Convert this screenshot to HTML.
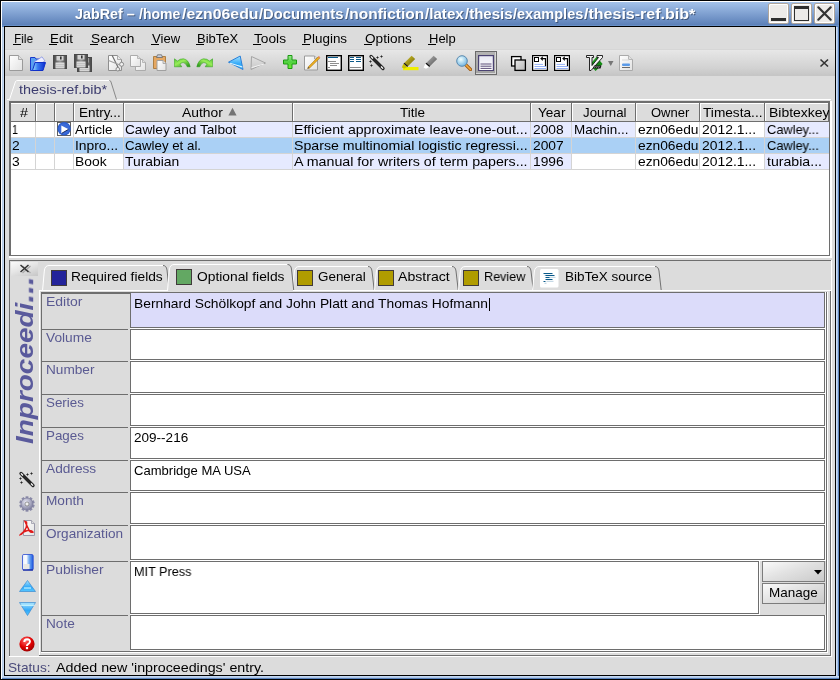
<!DOCTYPE html>
<html><head><meta charset="utf-8">
<style>
*{margin:0;padding:0;box-sizing:border-box}
html,body{width:840px;height:680px;overflow:hidden;background:#dcdcdc}
body{position:relative;font-family:"Liberation Sans",sans-serif;font-size:12px;color:#000}
.a{position:absolute;display:block}
.t{position:absolute;white-space:nowrap;transform-origin:0 0;will-change:transform}
</style></head><body>
<div class="a" style="left:0px;top:0px;width:840px;height:680px;background:#000"></div>
<div class="a" style="left:1px;top:1px;width:838px;height:678px;background:linear-gradient(#a4c2ea 1px,#5c80b8 24px,#6890c8 24px,#6890c8 25px,#5a82bc 25px);"></div>
<div class="a" style="left:1px;top:1px;width:838px;height:1px;background:#fff"></div>
<div class="a" style="left:1px;top:1px;width:1px;height:678px;background:#fff"></div>
<div class="a" style="left:2px;top:27px;width:1px;height:649px;background:#b8cce6"></div>
<div class="a" style="left:3px;top:27px;width:1px;height:649px;background:#c4d8f2"></div>
<div class="a" style="left:836px;top:27px;width:1px;height:649px;background:#c8dbf3"></div>
<div class="a" style="left:837px;top:27px;width:1px;height:649px;background:#a9c3e7"></div>
<div class="a" style="left:838px;top:27px;width:1px;height:649px;background:#5a82bc"></div>
<div class="a" style="left:2px;top:676px;width:837px;height:1px;background:#c4d8f2"></div>
<div class="a" style="left:2px;top:677px;width:837px;height:1px;background:#b0c8e8"></div>
<div class="a" style="left:2px;top:678px;width:837px;height:1px;background:#5a82bc"></div>
<div class="a" style="left:4px;top:26px;width:832px;height:650px;background:#000"></div>
<div class="a" style="left:5px;top:27px;width:830px;height:648px;background:#dcdcdc"></div>
<div class="t" style="left:76.00px;top:8.00px;font-size:14px;line-height:14px;color:rgba(20,30,50,.5);font-weight:bold;font-style:normal;transform:scaleX(1.0214);">JabRef –</div>
<div class="t" style="left:140.30px;top:8.00px;font-size:14px;line-height:14px;color:rgba(20,30,50,.5);font-weight:bold;font-style:normal;transform:scaleX(1.0036);">/home</div>
<div class="t" style="left:183.30px;top:8.00px;font-size:14px;line-height:14px;color:rgba(20,30,50,.5);font-weight:bold;font-style:normal;transform:scaleX(1.1300);">/ezn06edu</div>
<div class="t" style="left:260.30px;top:8.00px;font-size:14px;line-height:14px;color:rgba(20,30,50,.5);font-weight:bold;font-style:normal;transform:scaleX(1.0524);">/Documents</div>
<div class="t" style="left:345.60px;top:8.00px;font-size:14px;line-height:14px;color:rgba(20,30,50,.5);font-weight:bold;font-style:normal;transform:scaleX(1.1069);">/nonfiction</div>
<div class="t" style="left:425.80px;top:8.00px;font-size:14px;line-height:14px;color:rgba(20,30,50,.5);font-weight:bold;font-style:normal;transform:scaleX(1.0838);">/latex</div>
<div class="t" style="left:465.60px;top:8.00px;font-size:14px;line-height:14px;color:rgba(20,30,50,.5);font-weight:bold;font-style:normal;transform:scaleX(1.0733);">/thesis</div>
<div class="t" style="left:513.60px;top:8.00px;font-size:14px;line-height:14px;color:rgba(20,30,50,.5);font-weight:bold;font-style:normal;transform:scaleX(1.0384);">/examples</div>
<div class="t" style="left:584.90px;top:8.00px;font-size:14px;line-height:14px;color:rgba(20,30,50,.5);font-weight:bold;font-style:normal;transform:scaleX(1.1445);">/thesis-ref.bib*</div>
<div class="t" style="left:75.00px;top:7.00px;font-size:14px;line-height:14px;color:#fff;font-weight:bold;font-style:normal;transform:scaleX(1.0214);">JabRef –</div>
<div class="t" style="left:139.30px;top:7.00px;font-size:14px;line-height:14px;color:#fff;font-weight:bold;font-style:normal;transform:scaleX(1.0036);">/home</div>
<div class="t" style="left:182.30px;top:7.00px;font-size:14px;line-height:14px;color:#fff;font-weight:bold;font-style:normal;transform:scaleX(1.1300);">/ezn06edu</div>
<div class="t" style="left:259.30px;top:7.00px;font-size:14px;line-height:14px;color:#fff;font-weight:bold;font-style:normal;transform:scaleX(1.0524);">/Documents</div>
<div class="t" style="left:344.60px;top:7.00px;font-size:14px;line-height:14px;color:#fff;font-weight:bold;font-style:normal;transform:scaleX(1.1069);">/nonfiction</div>
<div class="t" style="left:424.80px;top:7.00px;font-size:14px;line-height:14px;color:#fff;font-weight:bold;font-style:normal;transform:scaleX(1.0838);">/latex</div>
<div class="t" style="left:464.60px;top:7.00px;font-size:14px;line-height:14px;color:#fff;font-weight:bold;font-style:normal;transform:scaleX(1.0733);">/thesis</div>
<div class="t" style="left:512.60px;top:7.00px;font-size:14px;line-height:14px;color:#fff;font-weight:bold;font-style:normal;transform:scaleX(1.0384);">/examples</div>
<div class="t" style="left:583.90px;top:7.00px;font-size:14px;line-height:14px;color:#fff;font-weight:bold;font-style:normal;transform:scaleX(1.1445);">/thesis-ref.bib*</div>
<div class="a" style="left:768px;top:3px;width:21px;height:21px;background:#edebe9;border:1px solid #b0a69c;border-radius:2px;box-shadow:inset 1px 1px 0 #fff, inset -1px -1px 0 #fff"></div>
<div class="a" style="left:791px;top:3px;width:21px;height:21px;background:#edebe9;border:1px solid #b0a69c;border-radius:2px;box-shadow:inset 1px 1px 0 #fff, inset -1px -1px 0 #fff"></div>
<div class="a" style="left:814px;top:3px;width:21px;height:21px;background:#edebe9;border:1px solid #b0a69c;border-radius:2px;box-shadow:inset 1px 1px 0 #fff, inset -1px -1px 0 #fff"></div>
<div class="a" style="left:771px;top:18px;width:15px;height:3px;background:#2e2e2e"></div>
<div class="a" style="left:794px;top:6px;width:15px;height:15px;border:1px solid #2e2e2e;border-top:3px solid #2e2e2e;background:#eceae8"></div>
<svg class="a" style="left:814px;top:3px;" width="21" height="21" viewBox="0 0 21 21"><path d="M4.3 4.3 L16.7 16.7 M16.7 4.3 L4.3 16.7" stroke="#333" stroke-width="2.2" stroke-linecap="round"/></svg>
<div class="t" style="left:13.90px;top:32.00px;font-size:13px;line-height:13px;color:#000;font-weight:normal;font-style:normal;transform:scaleX(0.9117);">File</div>
<div class="a" style="left:13px;top:44px;width:8px;height:1px;background:#000"></div>
<div class="t" style="left:50.00px;top:32.00px;font-size:13px;line-height:13px;color:#000;font-weight:normal;font-style:normal;transform:scaleX(1.0268);">Edit</div>
<div class="a" style="left:49px;top:44px;width:8px;height:1px;background:#000"></div>
<div class="t" style="left:91.30px;top:32.00px;font-size:13px;line-height:13px;color:#000;font-weight:normal;font-style:normal;transform:scaleX(1.0534);">Search</div>
<div class="a" style="left:90px;top:44px;width:8px;height:1px;background:#000"></div>
<div class="t" style="left:151.80px;top:32.00px;font-size:13px;line-height:13px;color:#000;font-weight:normal;font-style:normal;transform:scaleX(1.0071);">View</div>
<div class="a" style="left:151px;top:44px;width:8px;height:1px;background:#000"></div>
<div class="t" style="left:197.00px;top:32.00px;font-size:13px;line-height:13px;color:#000;font-weight:normal;font-style:normal;transform:scaleX(0.9951);">BibTeX</div>
<div class="a" style="left:196px;top:44px;width:8px;height:1px;background:#000"></div>
<div class="t" style="left:254.30px;top:32.00px;font-size:13px;line-height:13px;color:#000;font-weight:normal;font-style:normal;transform:scaleX(1.0544);">Tools</div>
<div class="a" style="left:253px;top:44px;width:8px;height:1px;background:#000"></div>
<div class="t" style="left:303.30px;top:32.00px;font-size:13px;line-height:13px;color:#000;font-weight:normal;font-style:normal;transform:scaleX(1.0340);">Plugins</div>
<div class="a" style="left:302px;top:44px;width:8px;height:1px;background:#000"></div>
<div class="t" style="left:364.60px;top:32.00px;font-size:13px;line-height:13px;color:#000;font-weight:normal;font-style:normal;transform:scaleX(1.0469);">Options</div>
<div class="a" style="left:364px;top:44px;width:8px;height:1px;background:#000"></div>
<div class="t" style="left:429.30px;top:32.00px;font-size:13px;line-height:13px;color:#000;font-weight:normal;font-style:normal;transform:scaleX(0.9981);">Help</div>
<div class="a" style="left:428px;top:44px;width:8px;height:1px;background:#000"></div>
<div class="a" style="left:5px;top:49px;width:830px;height:1px;background:#d6d6d6"></div>
<div class="a" style="left:5px;top:50px;width:830px;height:26px;background:linear-gradient(#e7e7e7,#e2e2e2 4px,#d2d2d2 18px,#c6c6c6 25px)"></div>
<div class="a" style="left:7px;top:99px;width:824px;height:1px;background:#fff"></div>
<svg class="a" style="left:8px;top:79px;" width="112" height="22" viewBox="0 0 112 22"><path d="M1.5 20.5 L7.5 2.5 Q8.2 1.5 10 1.5 L101 1.5" fill="#e0e0e0" stroke="none"/><path d="M1 21 L1.5 20.5 L7.5 2.5 Q8.2 1.5 10 1.5 L101 1.5 Q102.5 1.5 103 3 L108.5 21 Z" fill="#dfdfdf"/><path d="M0 20.5 L1.5 20.5 L7.5 2.5 Q8.2 1.5 10 1.5 L101 1.5" fill="none" stroke="#fff" stroke-width="1"/><path d="M101.5 1.5 Q102.5 1.5 103 3 L108.5 20.5" fill="none" stroke="#888" stroke-width="1"/></svg>
<div class="t" style="left:18.90px;top:83.00px;font-size:13px;line-height:13px;color:#3c3c6e;font-weight:normal;font-style:normal;transform:scaleX(1.1082);">thesis-ref.bib*</div>
<div class="a" style="left:9px;top:101px;width:823px;height:157px;background:#fff"></div>
<div class="a" style="left:9px;top:101px;width:822px;height:2px;background:#6e6e6e"></div>
<div class="a" style="left:9px;top:101px;width:2px;height:155px;background:#6e6e6e"></div>
<div class="a" style="left:9px;top:255px;width:821px;height:1px;background:#6e6e6e"></div>
<div class="a" style="left:829px;top:101px;width:1px;height:155px;background:#6e6e6e"></div>
<div class="a" style="left:830px;top:101px;width:2px;height:157px;background:#fff"></div>
<div class="a" style="left:9px;top:256px;width:823px;height:2px;background:#fff"></div>
<div class="a" style="left:11px;top:103px;width:818px;height:18px;background:#dcdcdc"></div>
<div class="a" style="left:11px;top:103px;width:818px;height:1px;background:#fff"></div>
<div class="a" style="left:35px;top:102px;width:1px;height:20px;background:#6e6e6e"></div>
<div class="a" style="left:36px;top:103px;width:1px;height:18px;background:#fff"></div>
<div class="a" style="left:54px;top:102px;width:1px;height:20px;background:#6e6e6e"></div>
<div class="a" style="left:55px;top:103px;width:1px;height:18px;background:#fff"></div>
<div class="a" style="left:73px;top:102px;width:1px;height:20px;background:#6e6e6e"></div>
<div class="a" style="left:74px;top:103px;width:1px;height:18px;background:#fff"></div>
<div class="a" style="left:123px;top:102px;width:1px;height:20px;background:#6e6e6e"></div>
<div class="a" style="left:124px;top:103px;width:1px;height:18px;background:#fff"></div>
<div class="a" style="left:292px;top:102px;width:1px;height:20px;background:#6e6e6e"></div>
<div class="a" style="left:293px;top:103px;width:1px;height:18px;background:#fff"></div>
<div class="a" style="left:530px;top:102px;width:1px;height:20px;background:#6e6e6e"></div>
<div class="a" style="left:531px;top:103px;width:1px;height:18px;background:#fff"></div>
<div class="a" style="left:571px;top:102px;width:1px;height:20px;background:#6e6e6e"></div>
<div class="a" style="left:572px;top:103px;width:1px;height:18px;background:#fff"></div>
<div class="a" style="left:635px;top:102px;width:1px;height:20px;background:#6e6e6e"></div>
<div class="a" style="left:636px;top:103px;width:1px;height:18px;background:#fff"></div>
<div class="a" style="left:699px;top:102px;width:1px;height:20px;background:#6e6e6e"></div>
<div class="a" style="left:700px;top:103px;width:1px;height:18px;background:#fff"></div>
<div class="a" style="left:764px;top:102px;width:1px;height:20px;background:#6e6e6e"></div>
<div class="a" style="left:765px;top:103px;width:1px;height:18px;background:#fff"></div>
<div class="a" style="left:11px;top:121px;width:818px;height:1px;background:#6e6e6e"></div>
<div class="a" style="left:828px;top:102px;width:1px;height:20px;background:#6e6e6e"></div>
<div class="a" style="left:11px;top:122px;width:24px;height:15px;background:#fff"></div>
<div class="a" style="left:35px;top:122px;width:19px;height:15px;background:#fff"></div>
<div class="a" style="left:54px;top:122px;width:19px;height:15px;background:#fff"></div>
<div class="a" style="left:73px;top:122px;width:50px;height:15px;background:#fff"></div>
<div class="a" style="left:123px;top:122px;width:169px;height:15px;background:#e6eaff"></div>
<div class="a" style="left:292px;top:122px;width:238px;height:15px;background:#e6eaff"></div>
<div class="a" style="left:530px;top:122px;width:41px;height:15px;background:#e6eaff"></div>
<div class="a" style="left:571px;top:122px;width:64px;height:15px;background:#e6eaff"></div>
<div class="a" style="left:635px;top:122px;width:64px;height:15px;background:#fff"></div>
<div class="a" style="left:699px;top:122px;width:65px;height:15px;background:#fff"></div>
<div class="a" style="left:764px;top:122px;width:65px;height:15px;background:#e6eaff"></div>
<div class="a" style="left:11px;top:138px;width:24px;height:15px;background:#aad0f5"></div>
<div class="a" style="left:35px;top:138px;width:19px;height:15px;background:#aad0f5"></div>
<div class="a" style="left:54px;top:138px;width:19px;height:15px;background:#aad0f5"></div>
<div class="a" style="left:73px;top:138px;width:50px;height:15px;background:#aad0f5"></div>
<div class="a" style="left:123px;top:138px;width:169px;height:15px;background:#aad0f5"></div>
<div class="a" style="left:292px;top:138px;width:238px;height:15px;background:#aad0f5"></div>
<div class="a" style="left:530px;top:138px;width:41px;height:15px;background:#aad0f5"></div>
<div class="a" style="left:571px;top:138px;width:64px;height:15px;background:#aad0f5"></div>
<div class="a" style="left:635px;top:138px;width:64px;height:15px;background:#aad0f5"></div>
<div class="a" style="left:699px;top:138px;width:65px;height:15px;background:#aad0f5"></div>
<div class="a" style="left:764px;top:138px;width:65px;height:15px;background:#aad0f5"></div>
<div class="a" style="left:11px;top:154px;width:24px;height:15px;background:#fff"></div>
<div class="a" style="left:35px;top:154px;width:19px;height:15px;background:#fff"></div>
<div class="a" style="left:54px;top:154px;width:19px;height:15px;background:#fff"></div>
<div class="a" style="left:73px;top:154px;width:50px;height:15px;background:#fff"></div>
<div class="a" style="left:123px;top:154px;width:169px;height:15px;background:#e6eaff"></div>
<div class="a" style="left:292px;top:154px;width:238px;height:15px;background:#e6eaff"></div>
<div class="a" style="left:530px;top:154px;width:41px;height:15px;background:#e6eaff"></div>
<div class="a" style="left:571px;top:154px;width:64px;height:15px;background:#fff"></div>
<div class="a" style="left:635px;top:154px;width:64px;height:15px;background:#fff"></div>
<div class="a" style="left:699px;top:154px;width:65px;height:15px;background:#fff"></div>
<div class="a" style="left:764px;top:154px;width:65px;height:15px;background:#e6eaff"></div>
<div class="a" style="left:11px;top:137px;width:818px;height:1px;background:#d4d4d4"></div>
<div class="a" style="left:11px;top:153px;width:818px;height:1px;background:#d4d4d4"></div>
<div class="a" style="left:11px;top:169px;width:818px;height:1px;background:#d4d4d4"></div>
<div class="a" style="left:35px;top:122px;width:1px;height:48px;background:#d4d4d4"></div>
<div class="a" style="left:54px;top:122px;width:1px;height:48px;background:#d4d4d4"></div>
<div class="a" style="left:73px;top:122px;width:1px;height:48px;background:#d4d4d4"></div>
<div class="a" style="left:123px;top:122px;width:1px;height:48px;background:#d4d4d4"></div>
<div class="a" style="left:292px;top:122px;width:1px;height:48px;background:#d4d4d4"></div>
<div class="a" style="left:530px;top:122px;width:1px;height:48px;background:#d4d4d4"></div>
<div class="a" style="left:571px;top:122px;width:1px;height:48px;background:#d4d4d4"></div>
<div class="a" style="left:635px;top:122px;width:1px;height:48px;background:#d4d4d4"></div>
<div class="a" style="left:699px;top:122px;width:1px;height:48px;background:#d4d4d4"></div>
<div class="a" style="left:764px;top:122px;width:1px;height:48px;background:#d4d4d4"></div>
<div class="t" style="left:20.00px;top:106.00px;font-size:13px;line-height:13px;color:#000;font-weight:normal;font-style:normal;transform:scaleX(1.1034);">#</div>
<div class="t" style="left:78.60px;top:106.00px;font-size:13px;line-height:13px;color:#000;font-weight:normal;font-style:normal;transform:scaleX(1.0398);">Entry...</div>
<div class="t" style="left:182.10px;top:106.00px;font-size:13px;line-height:13px;color:#000;font-weight:normal;font-style:normal;transform:scaleX(1.0653);">Author</div>
<div class="t" style="left:400.40px;top:106.00px;font-size:13px;line-height:13px;color:#000;font-weight:normal;font-style:normal;transform:scaleX(1.0373);">Title</div>
<div class="t" style="left:538.30px;top:106.00px;font-size:13px;line-height:13px;color:#000;font-weight:normal;font-style:normal;transform:scaleX(1.0438);">Year</div>
<div class="t" style="left:583.30px;top:106.00px;font-size:13px;line-height:13px;color:#000;font-weight:normal;font-style:normal;transform:scaleX(1.0199);">Journal</div>
<div class="t" style="left:651.00px;top:106.00px;font-size:13px;line-height:13px;color:#000;font-weight:normal;font-style:normal;transform:scaleX(0.9922);">Owner</div>
<div class="t" style="left:703.40px;top:106.00px;font-size:13px;line-height:13px;color:#000;font-weight:normal;font-style:normal;transform:scaleX(1.0512);">Timesta...</div>
<div class="a" style="left:764px;top:103px;width:65px;height:17px;overflow:hidden">
<div class="t" style="left:5.00px;top:3.00px;font-size:13px;line-height:13px;color:#000;font-weight:normal;font-style:normal;transform:scaleX(1.0754);">Bibtexkey</div>
</div>
<svg class="a" style="left:228px;top:107px;" width="9" height="9" viewBox="0 0 9 9"><path d="M4.5 0.7 L8.6 8.5 L0.4 8.5 Z" fill="#747474"/></svg>
<div class="t" style="left:12.00px;top:123.00px;font-size:13px;line-height:13px;color:#000;font-weight:normal;font-style:normal;transform:scaleX(0.8276);">1</div>
<div class="t" style="left:12.00px;top:139.00px;font-size:13px;line-height:13px;color:#000;font-weight:normal;font-style:normal;transform:scaleX(1.0650);">2</div>
<div class="t" style="left:12.00px;top:155.00px;font-size:13px;line-height:13px;color:#000;font-weight:normal;font-style:normal;transform:scaleX(1.0650);">3</div>
<div class="t" style="left:75.30px;top:123.00px;font-size:13px;line-height:13px;color:#000;font-weight:normal;font-style:normal;transform:scaleX(1.0416);">Article</div>
<div class="t" style="left:75.30px;top:139.00px;font-size:13px;line-height:13px;color:#000;font-weight:normal;font-style:normal;transform:scaleX(1.0650);">Inpro...</div>
<div class="t" style="left:75.30px;top:155.00px;font-size:13px;line-height:13px;color:#000;font-weight:normal;font-style:normal;transform:scaleX(1.0650);">Book</div>
<div class="t" style="left:125.40px;top:123.00px;font-size:13px;line-height:13px;color:#000;font-weight:normal;font-style:normal;transform:scaleX(1.0509);">Cawley and Talbot</div>
<div class="t" style="left:125.40px;top:139.00px;font-size:13px;line-height:13px;color:#000;font-weight:normal;font-style:normal;transform:scaleX(1.0215);">Cawley et al.</div>
<div class="t" style="left:125.40px;top:155.00px;font-size:13px;line-height:13px;color:#000;font-weight:normal;font-style:normal;transform:scaleX(1.0669);">Turabian</div>
<div class="t" style="left:294.00px;top:123.00px;font-size:13px;line-height:13px;color:#000;font-weight:normal;font-style:normal;transform:scaleX(1.0860);">Efficient approximate leave-one-out...</div>
<div class="t" style="left:294.00px;top:139.00px;font-size:13px;line-height:13px;color:#000;font-weight:normal;font-style:normal;transform:scaleX(1.0888);">Sparse multinomial logistic regressi...</div>
<div class="t" style="left:294.00px;top:155.00px;font-size:13px;line-height:13px;color:#000;font-weight:normal;font-style:normal;transform:scaleX(1.0959);">A manual for writers of term papers...</div>
<div class="t" style="left:532.50px;top:123.00px;font-size:13px;line-height:13px;color:#000;font-weight:normal;font-style:normal;transform:scaleX(1.0623);">2008</div>
<div class="t" style="left:532.50px;top:139.00px;font-size:13px;line-height:13px;color:#000;font-weight:normal;font-style:normal;transform:scaleX(1.0623);">2007</div>
<div class="t" style="left:532.50px;top:155.00px;font-size:13px;line-height:13px;color:#000;font-weight:normal;font-style:normal;transform:scaleX(1.0623);">1996</div>
<div class="t" style="left:573.50px;top:123.00px;font-size:13px;line-height:13px;color:#000;font-weight:normal;font-style:normal;transform:scaleX(1.0332);">Machin...</div>
<div class="t" style="left:637.50px;top:123.00px;font-size:13px;line-height:13px;color:#000;font-weight:normal;font-style:normal;transform:scaleX(1.0595);">ezn06edu</div>
<div class="t" style="left:701.60px;top:123.00px;font-size:13px;line-height:13px;color:#000;font-weight:normal;font-style:normal;transform:scaleX(1.0692);">2012.1...</div>
<div class="t" style="left:637.50px;top:139.00px;font-size:13px;line-height:13px;color:#000;font-weight:normal;font-style:normal;transform:scaleX(1.0595);">ezn06edu</div>
<div class="t" style="left:701.60px;top:139.00px;font-size:13px;line-height:13px;color:#000;font-weight:normal;font-style:normal;transform:scaleX(1.0692);">2012.1...</div>
<div class="t" style="left:637.50px;top:155.00px;font-size:13px;line-height:13px;color:#000;font-weight:normal;font-style:normal;transform:scaleX(1.0595);">ezn06edu</div>
<div class="t" style="left:701.60px;top:155.00px;font-size:13px;line-height:13px;color:#000;font-weight:normal;font-style:normal;transform:scaleX(1.0692);">2012.1...</div>
<div class="t" style="left:766.80px;top:123.00px;font-size:13px;line-height:13px;color:#000;font-weight:normal;font-style:normal;transform:scaleX(0.9867);">Cawley...</div>
<div class="t" style="left:766.80px;top:139.00px;font-size:13px;line-height:13px;color:#000;font-weight:normal;font-style:normal;transform:scaleX(0.9867);">Cawley...</div>
<div class="t" style="left:766.80px;top:155.00px;font-size:13px;line-height:13px;color:#000;font-weight:normal;font-style:normal;transform:scaleX(1.0870);">turabia...</div>
<svg class="a" style="left:57px;top:122px;" width="14" height="14" viewBox="0 0 14 14"><rect x="0.5" y="0.5" width="13" height="13" fill="none" stroke="#505050" stroke-width=".9"/><circle cx="7.1" cy="6.8" r="6.7" fill="#2a5ccc"/><circle cx="7.1" cy="6.8" r="5.6" fill="#3a6ad8"/><path d="M4.3 3.5 L11.6 7.3 L4.3 11.5 Z" fill="#fff"/><path d="M4.6 11.4 L11.6 7.3" stroke="#102050" stroke-width=".9"/></svg>
<div class="a" style="left:9px;top:260px;width:823px;height:1px;background:#6e6e6e"></div>
<div class="a" style="left:9px;top:260px;width:1px;height:397px;background:#6e6e6e"></div>
<div class="a" style="left:9px;top:656px;width:823px;height:1px;background:#fff"></div>
<div class="a" style="left:831px;top:260px;width:1px;height:397px;background:#fff"></div>
<div class="a" style="left:11px;top:262px;width:27px;height:14px;background:linear-gradient(160deg,#fafafa,#e6e6e6 45%,#c6c6c6)"></div>
<svg class="a" style="left:19px;top:264px;" width="13" height="11" viewBox="0 0 13 11"><path d="M2.5 1.5 L10.5 8.5 M10.5 1.5 L2.5 8.5" stroke="#aaa" stroke-width="1.3" transform="translate(1,0.6)"/><path d="M1.5 1 L9.5 8 M9.5 1 L1.5 8" stroke="#333" stroke-width="1.5"/></svg>
<div class="t" style="left:0;top:0;width:0;height:0;transform:translate(33px,444px) rotate(-90deg)"><div class="t" style="left:-0.00px;top:-20.50px;font-size:24px;line-height:24px;font-weight:bold;font-style:italic;color:#5a5a9c;transform:scaleX(1.1642)">Inproceedi</div></div>
<div class="t" style="left:0;top:0;width:0;height:0;transform:translate(33.2px,302.6px) rotate(-90deg)"><div class="t" style="left:-0.00px;top:-23.50px;font-size:28px;line-height:28px;font-weight:bold;font-style:italic;color:#5a5a9c;transform:scaleX(1.1306)">...</div></div>
<div class="a" style="left:39px;top:290px;width:792px;height:1px;background:#fff"></div>
<div class="a" style="left:39px;top:290px;width:1px;height:366px;background:#fff"></div>
<div class="a" style="left:39px;top:655px;width:792px;height:1px;background:#6e6e6e"></div>
<div class="a" style="left:830px;top:290px;width:1px;height:366px;background:#6e6e6e"></div>
<svg class="a" style="left:42px;top:265px;" width="129" height="27" viewBox="0 0 129 27"><path d="M0.5 26 L2.3 6 Q2.8 0.5 7 0.5 L121 0.5 Q124.4 0.5 125 5 L127.5 26" fill="#dcdcdc" stroke="none"/><path d="M0.5 26 L2.3 6 Q2.8 0.5 7 0.5 L121 0.5" fill="none" stroke="#fff"/><path d="M121 0.5 Q124.4 0.5 125 5 L127.2 25" fill="none" stroke="#707070"/></svg>
<svg class="a" style="left:292px;top:266px;" width="84" height="26" viewBox="0 0 84 26"><path d="M0.5 25 L2.3 6 Q2.8 0.5 7 0.5 L76 0.5 Q79.4 0.5 80 5 L82.5 25" fill="#dcdcdc" stroke="none"/><path d="M0.5 25 L2.3 6 Q2.8 0.5 7 0.5 L76 0.5" fill="none" stroke="#fff"/><path d="M76 0.5 Q79.4 0.5 80 5 L82.2 24" fill="none" stroke="#707070"/></svg>
<svg class="a" style="left:374px;top:266px;" width="86" height="26" viewBox="0 0 86 26"><path d="M0.5 25 L2.3 6 Q2.8 0.5 7 0.5 L78 0.5 Q81.4 0.5 82 5 L84.5 25" fill="#dcdcdc" stroke="none"/><path d="M0.5 25 L2.3 6 Q2.8 0.5 7 0.5 L78 0.5" fill="none" stroke="#fff"/><path d="M78 0.5 Q81.4 0.5 82 5 L84.2 24" fill="none" stroke="#707070"/></svg>
<svg class="a" style="left:458px;top:266px;" width="77" height="26" viewBox="0 0 77 26"><path d="M0.5 25 L2.3 6 Q2.8 0.5 7 0.5 L69 0.5 Q72.4 0.5 73 5 L75.5 25" fill="#dcdcdc" stroke="none"/><path d="M0.5 25 L2.3 6 Q2.8 0.5 7 0.5 L69 0.5" fill="none" stroke="#fff"/><path d="M69 0.5 Q72.4 0.5 73 5 L75.2 24" fill="none" stroke="#707070"/></svg>
<svg class="a" style="left:532px;top:266px;" width="131" height="26" viewBox="0 0 131 26"><path d="M0.5 25 L2.3 6 Q2.8 0.5 7 0.5 L123 0.5 Q126.4 0.5 127 5 L129.5 25" fill="#dcdcdc" stroke="none"/><path d="M0.5 25 L2.3 6 Q2.8 0.5 7 0.5 L123 0.5" fill="none" stroke="#fff"/><path d="M123 0.5 Q126.4 0.5 127 5 L129.2 24" fill="none" stroke="#707070"/></svg>
<svg class="a" style="left:167px;top:264px;" width="128.5" height="28" viewBox="0 0 128.5 28"><path d="M0.5 27 L2.3 6 Q2.8 0.5 7 0.5 L120.5 0.5 Q123.9 0.5 124.5 5 L127.0 27" fill="#dcdcdc" stroke="none"/><path d="M0.5 27 L2.3 6 Q2.8 0.5 7 0.5 L120.5 0.5" fill="none" stroke="#fff"/><path d="M120.5 0.5 Q123.9 0.5 124.5 5 L126.7 26" fill="none" stroke="#707070"/></svg>
<div class="a" style="left:39px;top:290px;width:792px;height:1px;background:#fff"></div>
<div class="a" style="left:168px;top:290px;width:125px;height:1px;background:#dcdcdc"></div>
<div class="a" style="left:51px;top:270px;width:16px;height:16px;background:#23239a;border:1px solid #403a3a"></div>
<div class="a" style="left:176px;top:269px;width:16px;height:16px;background:#63a863;border:1px solid #403a3a"></div>
<div class="a" style="left:297px;top:270px;width:16px;height:16px;background:#b09c00;border:1px solid #403a3a"></div>
<div class="a" style="left:378px;top:270px;width:16px;height:16px;background:#b09c00;border:1px solid #403a3a"></div>
<div class="a" style="left:463px;top:270px;width:16px;height:16px;background:#b09c00;border:1px solid #403a3a"></div>
<svg class="a" style="left:540px;top:269px;" width="19" height="19" viewBox="0 0 19 19"><rect x="0" y="0" width="18.5" height="18.5" rx="1.5" fill="#fff"/><path d="M3.5 5.5 H12.5 M5.5 7.5 H14.5 M5.5 9.5 H9.5 M5.5 11.5 H12.5 M3.5 13.5 H5.5" stroke="#b8d0e0" stroke-width="1" transform="translate(1,.8)"/><path d="M3.5 4.5 H12.5 M5.5 6.5 H14.5 M5.5 8.5 H9.5 M5.5 10.5 H12.5 M3.5 12.5 H5.5" stroke="#0a5a8a" stroke-width="1.2"/></svg>
<div class="t" style="left:71.30px;top:270.00px;font-size:13px;line-height:13px;color:#000;font-weight:normal;font-style:normal;transform:scaleX(1.0577);">Required fields</div>
<div class="t" style="left:196.50px;top:270.00px;font-size:13px;line-height:13px;color:#000;font-weight:normal;font-style:normal;transform:scaleX(1.0619);">Optional fields</div>
<div class="t" style="left:317.50px;top:270.00px;font-size:13px;line-height:13px;color:#000;font-weight:normal;font-style:normal;transform:scaleX(1.0314);">General</div>
<div class="t" style="left:398.30px;top:270.00px;font-size:13px;line-height:13px;color:#000;font-weight:normal;font-style:normal;transform:scaleX(1.0839);">Abstract</div>
<div class="t" style="left:483.60px;top:270.00px;font-size:13px;line-height:13px;color:#000;font-weight:normal;font-style:normal;transform:scaleX(0.9696);">Review</div>
<div class="t" style="left:565.20px;top:270.00px;font-size:13px;line-height:13px;color:#000;font-weight:normal;font-style:normal;transform:scaleX(1.0394);">BibTeX source</div>
<div class="a" style="left:41px;top:292px;width:786px;height:360px;background:#dcdcdc"></div>
<div class="a" style="left:41px;top:292px;width:786px;height:2px;background:#6e6e6e"></div>
<div class="a" style="left:41px;top:292px;width:1px;height:360px;background:#6e6e6e"></div>
<div class="a" style="left:41px;top:651px;width:786px;height:1px;background:#6e6e6e"></div>
<div class="a" style="left:826px;top:292px;width:1px;height:360px;background:#6e6e6e"></div>
<div class="a" style="left:41px;top:652px;width:786px;height:1px;background:#fff"></div>
<div class="a" style="left:827px;top:292px;width:1px;height:361px;background:#fff"></div>
<div class="a" style="left:130px;top:292px;width:695px;height:36px;background:#dcdcfa;border:1px solid #6e6e6e"></div>
<div class="a" style="left:130px;top:328px;width:696px;height:1px;background:#fff"></div>
<div class="a" style="left:825px;top:292px;width:1px;height:37px;background:#fff"></div>
<div class="a" style="left:42px;top:329px;width:86px;height:1px;background:#6e6e6e"></div>
<div class="a" style="left:130px;top:329px;width:695px;height:31px;background:#fff;border:1px solid #6e6e6e"></div>
<div class="a" style="left:130px;top:360px;width:696px;height:1px;background:#fff"></div>
<div class="a" style="left:825px;top:329px;width:1px;height:32px;background:#fff"></div>
<div class="a" style="left:42px;top:361px;width:86px;height:1px;background:#6e6e6e"></div>
<div class="a" style="left:130px;top:361px;width:695px;height:32px;background:#fff;border:1px solid #6e6e6e"></div>
<div class="a" style="left:130px;top:393px;width:696px;height:1px;background:#fff"></div>
<div class="a" style="left:825px;top:361px;width:1px;height:33px;background:#fff"></div>
<div class="a" style="left:42px;top:394px;width:86px;height:1px;background:#6e6e6e"></div>
<div class="a" style="left:130px;top:394px;width:695px;height:32px;background:#fff;border:1px solid #6e6e6e"></div>
<div class="a" style="left:130px;top:426px;width:696px;height:1px;background:#fff"></div>
<div class="a" style="left:825px;top:394px;width:1px;height:33px;background:#fff"></div>
<div class="a" style="left:42px;top:427px;width:86px;height:1px;background:#6e6e6e"></div>
<div class="a" style="left:130px;top:427px;width:695px;height:32px;background:#fff;border:1px solid #6e6e6e"></div>
<div class="a" style="left:130px;top:459px;width:696px;height:1px;background:#fff"></div>
<div class="a" style="left:825px;top:427px;width:1px;height:33px;background:#fff"></div>
<div class="a" style="left:42px;top:460px;width:86px;height:1px;background:#6e6e6e"></div>
<div class="a" style="left:130px;top:460px;width:695px;height:31px;background:#fff;border:1px solid #6e6e6e"></div>
<div class="a" style="left:130px;top:491px;width:696px;height:1px;background:#fff"></div>
<div class="a" style="left:825px;top:460px;width:1px;height:32px;background:#fff"></div>
<div class="a" style="left:42px;top:492px;width:86px;height:1px;background:#6e6e6e"></div>
<div class="a" style="left:130px;top:492px;width:695px;height:32px;background:#fff;border:1px solid #6e6e6e"></div>
<div class="a" style="left:130px;top:524px;width:696px;height:1px;background:#fff"></div>
<div class="a" style="left:825px;top:492px;width:1px;height:33px;background:#fff"></div>
<div class="a" style="left:42px;top:525px;width:86px;height:1px;background:#6e6e6e"></div>
<div class="a" style="left:130px;top:525px;width:695px;height:35px;background:#fff;border:1px solid #6e6e6e"></div>
<div class="a" style="left:130px;top:560px;width:696px;height:1px;background:#fff"></div>
<div class="a" style="left:825px;top:525px;width:1px;height:36px;background:#fff"></div>
<div class="a" style="left:42px;top:561px;width:86px;height:1px;background:#6e6e6e"></div>
<div class="a" style="left:130px;top:561px;width:629px;height:53px;background:#fff;border:1px solid #6e6e6e"></div>
<div class="a" style="left:130px;top:614px;width:630px;height:1px;background:#fff"></div>
<div class="a" style="left:759px;top:561px;width:1px;height:54px;background:#fff"></div>
<div class="a" style="left:42px;top:615px;width:86px;height:1px;background:#6e6e6e"></div>
<div class="a" style="left:130px;top:615px;width:695px;height:35px;background:#fff;border:1px solid #6e6e6e"></div>
<div class="a" style="left:130px;top:650px;width:696px;height:1px;background:#fff"></div>
<div class="a" style="left:825px;top:615px;width:1px;height:36px;background:#fff"></div>
<div class="t" style="left:45.70px;top:295.00px;font-size:13px;line-height:13px;color:#5a5a92;font-weight:normal;font-style:normal;transform:scaleX(1.0751);">Editor</div>
<div class="t" style="left:45.60px;top:331.00px;font-size:13px;line-height:13px;color:#5a5a92;font-weight:normal;font-style:normal;transform:scaleX(1.0565);">Volume</div>
<div class="t" style="left:46.40px;top:363.00px;font-size:13px;line-height:13px;color:#5a5a92;font-weight:normal;font-style:normal;transform:scaleX(1.0486);">Number</div>
<div class="t" style="left:46.40px;top:396.00px;font-size:13px;line-height:13px;color:#5a5a92;font-weight:normal;font-style:normal;transform:scaleX(1.0285);">Series</div>
<div class="t" style="left:46.40px;top:429.00px;font-size:13px;line-height:13px;color:#5a5a92;font-weight:normal;font-style:normal;transform:scaleX(1.0285);">Pages</div>
<div class="t" style="left:46.00px;top:462.00px;font-size:13px;line-height:13px;color:#5a5a92;font-weight:normal;font-style:normal;transform:scaleX(1.0524);">Address</div>
<div class="t" style="left:46.40px;top:494.00px;font-size:13px;line-height:13px;color:#5a5a92;font-weight:normal;font-style:normal;transform:scaleX(1.0484);">Month</div>
<div class="t" style="left:46.40px;top:527.00px;font-size:13px;line-height:13px;color:#5a5a92;font-weight:normal;font-style:normal;transform:scaleX(1.0448);">Organization</div>
<div class="t" style="left:46.40px;top:563.00px;font-size:13px;line-height:13px;color:#5a5a92;font-weight:normal;font-style:normal;transform:scaleX(1.0627);">Publisher</div>
<div class="t" style="left:45.80px;top:617.00px;font-size:13px;line-height:13px;color:#5a5a92;font-weight:normal;font-style:normal;transform:scaleX(1.0492);">Note</div>
<div class="t" style="left:133.70px;top:297.00px;font-size:13px;line-height:13px;color:#000;font-weight:normal;font-style:normal;transform:scaleX(1.0628);">Bernhard Schölkopf and John Platt and Thomas Hofmann</div>
<div class="a" style="left:489px;top:298px;width:1px;height:13px;background:#000"></div>
<div class="t" style="left:133.80px;top:431.00px;font-size:13px;line-height:13px;color:#000;font-weight:normal;font-style:normal;transform:scaleX(1.0413);">209--216</div>
<div class="t" style="left:133.80px;top:464.00px;font-size:13px;line-height:13px;color:#000;font-weight:normal;font-style:normal;transform:scaleX(1.0034);">Cambridge MA USA</div>
<div class="t" style="left:133.70px;top:565.00px;font-size:13px;line-height:13px;color:#000;font-weight:normal;font-style:normal;transform:scaleX(0.9729);">MIT Press</div>
<div class="a" style="left:762px;top:561px;width:63px;height:21px;background:linear-gradient(160deg,#fafafa,#e2e2e2 45%,#cacaca);border:1px solid #7c7c7c"></div>
<svg class="a" style="left:814px;top:570px;" width="9" height="5" viewBox="0 0 9 5"><path d="M0 0 H8 L4 4.5 Z" fill="#000"/></svg>
<div class="a" style="left:762px;top:583px;width:63px;height:21px;background:linear-gradient(160deg,#fafafa,#e2e2e2 45%,#cacaca);border:1px solid #7c7c7c"></div>
<div class="t" style="left:769.30px;top:586.00px;font-size:13px;line-height:13px;color:#000;font-weight:normal;font-style:normal;transform:scaleX(1.0362);">Manage</div>
<div class="t" style="left:7.50px;top:661.00px;font-size:13px;line-height:13px;color:#4a4a7a;font-weight:normal;font-style:normal;transform:scaleX(1.0507);">Status:</div>
<div class="t" style="left:55.80px;top:661.00px;font-size:13px;line-height:13px;color:#000;font-weight:normal;font-style:normal;transform:scaleX(1.0962);">Added new &#x27;inproceedings&#x27; entry.</div>
<svg class="a" style="left:0;top:0" width="0" height="0"><defs><linearGradient id="gPage" x1="0" y1="0" x2="1" y2="1"><stop offset="0" stop-color="#fff"/><stop offset="1" stop-color="#e2e2e2"/></linearGradient><linearGradient id="gBlue" x1="0" y1="0" x2="1" y2="0"><stop offset="0" stop-color="#a0e8ff"/><stop offset=".4" stop-color="#3a7af0"/><stop offset="1" stop-color="#0a2ad0"/></linearGradient><linearGradient id="gFloppy" x1="0" y1="0" x2="1" y2="0"><stop offset="0" stop-color="#444"/><stop offset=".5" stop-color="#9a9a9a"/><stop offset="1" stop-color="#444"/></linearGradient><linearGradient id="gGreen" x1="0" y1="0" x2="0" y2="1"><stop offset="0" stop-color="#8ae060"/><stop offset="1" stop-color="#2a9a10"/></linearGradient><linearGradient id="gTri" x1="0" y1="0" x2="0" y2="1"><stop offset="0" stop-color="#a8e4ff"/><stop offset=".6" stop-color="#30a8f8"/><stop offset="1" stop-color="#58c8ff"/></linearGradient><radialGradient id="gRed" cx=".4" cy=".3" r=".7"><stop offset="0" stop-color="#ff6a6a"/><stop offset=".6" stop-color="#e00000"/><stop offset="1" stop-color="#a00000"/></radialGradient><radialGradient id="gGear" cx=".4" cy=".35" r=".7"><stop offset="0" stop-color="#e8e8f4"/><stop offset="1" stop-color="#7a7a9a"/></radialGradient><radialGradient id="gLens" cx=".4" cy=".35" r=".7"><stop offset="0" stop-color="#f0ffff"/><stop offset="1" stop-color="#6ab0e0"/></radialGradient><linearGradient id="gBtn" x1="0" y1="0" x2="0" y2="1"><stop offset="0" stop-color="#b8b8b8"/><stop offset="1" stop-color="#9a9a9a"/></linearGradient></defs></svg>
<svg class="a" style="left:9px;top:55px;" width="14" height="16" viewBox="0 0 14 16"><path d="M0.5 0.5 H9.5 L13.5 4.5 V15.5 H0.5 Z" fill="url(#gPage)" stroke="#9a9a9a"/><path d="M9.5 0.5 V4.5 H13.5" fill="#e0e0e0" stroke="#9a9a9a" stroke-width=".8"/></svg>
<svg class="a" style="left:30px;top:56px;" width="16" height="15" viewBox="0 0 16 15"><path d="M0.5 1.5 H5 L6 3 H12 V14.5 H0.5 Z" fill="#5aa0f0" stroke="#1a3acc"/><path d="M4 6 L12 0.8 L15 5 L8 9 Z" fill="#eef" stroke="#7a8ae0" stroke-width=".7"/><path d="M2.5 14.5 L5 6.5 H15.5 L13 14.5 Z" fill="url(#gBlue)" stroke="#1030c8"/></svg>
<svg class="a" style="left:53px;top:55px;" width="14" height="14" viewBox="0 0 14 14"><rect x="0.5" y="0.5" width="13" height="13" fill="url(#gFloppy)" stroke="#4a4a4a"/><rect x="3.5" y="1" width="7" height="4.5" fill="#d4d4d4"/><rect x="7.0" y="1.5" width="1.6" height="3" fill="#333"/><rect x="2.5" y="7.5" width="9" height="6" fill="#dcdcdc"/><path d="M3 9.7 H11 M3 11.7 H11" stroke="#b4b4b4" stroke-width=".8"/></svg>
<svg class="a" style="left:74px;top:54px;" width="18" height="18" viewBox="0 0 18 18"><rect x="3.5" y="3.5" width="14" height="14" fill="url(#gFloppy)" stroke="#4a4a4a"/><rect x="6.5" y="4" width="8" height="4.5" fill="#d4d4d4"/><rect x="10.5" y="4.5" width="1.6" height="3" fill="#333"/><rect x="5.5" y="11.5" width="10" height="6" fill="#dcdcdc"/><path d="M6 13.7 H15 M6 15.7 H15" stroke="#b4b4b4" stroke-width=".8"/><rect x="0.5" y="0.5" width="13" height="13" fill="url(#gFloppy)" stroke="#4a4a4a"/><rect x="3.5" y="1" width="7" height="4.5" fill="#d4d4d4"/><rect x="7.0" y="1.5" width="1.6" height="3" fill="#333"/><rect x="2.5" y="7.5" width="9" height="6" fill="#dcdcdc"/><path d="M3 9.7 H11 M3 11.7 H11" stroke="#b4b4b4" stroke-width=".8"/></svg>
<svg class="a" style="left:106px;top:53px;" width="20" height="20" viewBox="0 0 20 20"><path d="M2.5 2.5 H11.5 L15.5 6.5 V17.5 H2.5 Z" fill="url(#gPage)" stroke="#8e8e8e"/><path d="M11.5 2.5 V6.5 H15.5" fill="#e8e8e8" stroke="#9a9a9a" stroke-width=".8"/><path d="M6.2 2.5 L12.2 14.5" stroke="#6a6a6a" stroke-width="1.1"/><path d="M2.5 7.5 L14 12" stroke="#a0a0a0" stroke-width="1.1"/><circle cx="15.6" cy="11.3" r="2" fill="#f0f0f0" stroke="#8a8a8a" stroke-width="1"/><circle cx="11.8" cy="16.2" r="1.8" fill="#f0f0f0" stroke="#8a8a8a" stroke-width="1"/></svg>
<svg class="a" style="left:130px;top:55px;" width="17" height="17" viewBox="0 0 17 17"><path d="M5.5 4.5 H12.5 L15.5 7.5 V15.5 H5.5 Z" fill="url(#gPage)" stroke="#ababab"/><path d="M12.5 4.5 V7.5 H15.5" fill="#e0e0e0" stroke="#ababab" stroke-width=".8"/><path d="M0.5 0.5 H7.5 L10.5 3.5 V11.5 H0.5 Z" fill="url(#gPage)" stroke="#ababab"/><path d="M7.5 0.5 V3.5 H10.5" fill="#e0e0e0" stroke="#ababab" stroke-width=".8"/></svg>
<svg class="a" style="left:153px;top:54px;" width="14" height="17" viewBox="0 0 14 17"><path d="M0.5 2.5 H12.5 V14.5 H0.5 Z" fill="#e6a862" stroke="#a8783a" stroke-width=".9"/><path d="M3.5 3.5 L4.5 0.8 H8.5 L9.5 3.5 Z" fill="#c8d0e0" stroke="#6a6a6a" stroke-width=".8"/><path d="M4.0 6.5 H10.0 L13.0 9.5 V16.5 H4.0 Z" fill="url(#gPage)" stroke="#a0a0a0"/><path d="M10.0 6.5 V9.5 H13.0" fill="#e0e0e0" stroke="#a0a0a0" stroke-width=".8"/></svg>
<svg class="a" style="left:174px;top:58px;" width="17" height="10" viewBox="0 0 17 10"><defs><linearGradient id="gUn" x1="0" y1="0" x2="1" y2="1"><stop offset="0" stop-color="#58c838"/><stop offset=".4" stop-color="#98ec58"/><stop offset="1" stop-color="#1a8a10"/></linearGradient></defs><path d="M0.3 0.8 L3.5 3 Q6 0.6 9.5 0.8 Q14.5 1.5 16.2 8.8 L13.2 8.8 Q12 5 9.2 4.6 Q7 4.5 6.2 6.3 L7.8 8.8 L0.3 8.8 Z" fill="url(#gUn)" stroke="#2a9a18" stroke-width=".5"/></svg>
<svg class="a" style="left:196px;top:58px;" width="17" height="10" viewBox="0 0 17 10"><g transform="translate(17,0) scale(-1,1)"><defs><linearGradient id="gUn" x1="0" y1="0" x2="1" y2="1"><stop offset="0" stop-color="#58c838"/><stop offset=".4" stop-color="#98ec58"/><stop offset="1" stop-color="#1a8a10"/></linearGradient></defs><path d="M0.3 0.8 L3.5 3 Q6 0.6 9.5 0.8 Q14.5 1.5 16.2 8.8 L13.2 8.8 Q12 5 9.2 4.6 Q7 4.5 6.2 6.3 L7.8 8.8 L0.3 8.8 Z" fill="url(#gUn)" stroke="#2a9a18" stroke-width=".5"/></g></svg>
<svg class="a" style="left:227px;top:54px;" width="18" height="17" viewBox="0 0 18 17"><path d="M1.5 8.2 L13.2 2 L16 15.5 Z" fill="url(#gTri)" stroke="#2a80d8" stroke-width="1" stroke-linejoin="round"/><path d="M3 9.2 L15.5 13" stroke="#e8f8ff" stroke-width="1"/></svg>
<svg class="a" style="left:249px;top:54px;" width="18" height="17" viewBox="0 0 18 17"><defs><linearGradient id="gFw" x1="0" y1="0" x2="0" y2="1"><stop offset="0" stop-color="#e2e2e2"/><stop offset="1" stop-color="#c8c8c8"/></linearGradient></defs><path d="M16.5 9 L2.5 2.5 L2 15.5 Z" fill="url(#gFw)" stroke="#a4a4a4" stroke-width="1" stroke-linejoin="round"/><path d="M15 10 L2.5 13.6" stroke="#f4f4f4" stroke-width="1"/></svg>
<svg class="a" style="left:283px;top:55px;" width="15" height="15" viewBox="0 0 15 15"><defs><linearGradient id="gPl" x1="0" y1="0" x2="0" y2="1"><stop offset="0" stop-color="#9ae890"/><stop offset=".5" stop-color="#50d040"/><stop offset="1" stop-color="#70f030"/></linearGradient></defs><path d="M5 0.5 H9 V5 H13.5 V9 H9 V13.5 H5 V9 H0.5 V5 H5 Z" fill="url(#gPl)" stroke="#1a9a10" stroke-width="1"/></svg>
<svg class="a" style="left:304px;top:55px;" width="17" height="16" viewBox="0 0 17 16"><path d="M0.5 1.0 H10.5 L13.5 4.0 V15.0 H0.5 Z" fill="url(#gPage)" stroke="#9a9a9a"/><path d="M10.5 1.0 V4.0 H13.5" fill="#e0e0e0" stroke="#9a9a9a" stroke-width=".8"/><path d="M3.6 13.6 L4.4 11.8 L14.2 1.8 L15.6 3.2 L5.6 13 Z" fill="#f0b020" stroke="#a07010" stroke-width=".6"/><path d="M14.2 1.8 L15.6 3.2 L16.4 2.4 L15 1 Z" fill="#f08060"/><path d="M3.6 13.6 L4.4 11.8 L5.6 13 Z" fill="#555"/></svg>
<svg class="a" style="left:326px;top:55px;" width="16" height="16" viewBox="0 0 16 16"><rect x="0.7" y="0.7" width="14.6" height="14.6" fill="#fff" stroke="#000" stroke-width="1.4"/><rect x="2" y="2" width="10" height="1" fill="#0a5a8a"/><rect x="2" y="6" width="8" height="1" fill="#8e8e8e"/><rect x="4" y="8" width="9" height="1" fill="#8e8e8e"/><rect x="4" y="10" width="7" height="1" fill="#8e8e8e"/><rect x="2" y="12" width="2" height="1" fill="#8e8e8e"/></svg>
<svg class="a" style="left:348px;top:55px;" width="16" height="16" viewBox="0 0 16 16"><rect x="0.7" y="0.7" width="14.6" height="14.6" fill="#fff" stroke="#000" stroke-width="1.4"/><rect x="2" y="2" width="4" height="1" fill="#0a5a8a"/><rect x="8" y="2" width="5" height="1" fill="#0a5a8a"/><rect x="2" y="4" width="4" height="1" fill="#0a5a8a"/><rect x="8" y="4" width="5" height="1" fill="#0a5a8a"/><rect x="2" y="6" width="4" height="1" fill="#0a5a8a"/><rect x="8" y="6" width="5" height="1" fill="#0a5a8a"/><rect x="2" y="12" width="11" height="1" fill="#8a8a8a"/></svg>
<svg class="a" style="left:367px;top:53px;" width="20" height="20" viewBox="0 0 20 20"><path d="M4 3.5 L16 15.5" stroke="#262626" stroke-width="3.3" stroke-linecap="round"/><path d="M3.9 3.4 L6 5.5 M14 13.5 L16.1 15.6" stroke="#fff" stroke-width="1.3"/><path d="M10.5 2.8 L10.95 4.05 L12.2 4.5 L10.95 4.95 L10.5 6.2 L10.05 4.95 L8.8 4.5 L10.05 4.05 Z M14.5 1.8 L14.95 3.05 L16.2 3.5 L14.95 3.95 L14.5 5.2 L14.05 3.95 L12.8 3.5 L14.05 3.05 Z M3.5 6.8 L3.95 8.05 L5.2 8.5 L3.95 8.95 L3.5 10.2 L3.05 8.95 L1.8 8.5 L3.05 8.05 Z M4.5 10.8 L4.95 12.05 L6.2 12.5 L4.95 12.95 L4.5 14.2 L4.05 12.95 L2.8 12.5 L4.05 12.05 Z" fill="#262626"/></svg>
<svg class="a" style="left:398px;top:52px;" width="44" height="22" viewBox="0 0 44 22"><defs><linearGradient id="gHl" x1="0" y1="0" x2="1" y2="1"><stop offset="0" stop-color="#d8c830"/><stop offset="1" stop-color="#6a6000"/></linearGradient><linearGradient id="gMk" x1="0" y1="0" x2="1" y2="1"><stop offset="0" stop-color="#b8b8b8"/><stop offset="1" stop-color="#505050"/></linearGradient></defs><rect x="5" y="15" width="15.5" height="3.2" fill="#eeee00"/><path d="M6 11.2 L13.6 3.8 L17.2 7 L9.6 14.4 Z" fill="url(#gHl)"/><path d="M6 11.2 L9.6 14.4" stroke="#1a1a10" stroke-width="1.4"/><path d="M5.4 11.8 L9 15 L6.5 16.6 L3.8 15.4 Z" fill="#c8c000"/><path d="M28 11.2 L35.6 3.8 L39.2 7 L31.6 14.4 Z" fill="url(#gMk)"/><path d="M28 11.2 L31.6 14.4" stroke="#111" stroke-width="1.4"/><path d="M27.4 11.8 L31 15 L28 16.8 L25.6 15.6 Z" fill="#fff"/></svg>
<svg class="a" style="left:456px;top:55px;" width="16" height="16" viewBox="0 0 16 16"><path d="M9.5 9.5 L14.5 14.5" stroke="#a05a10" stroke-width="3.2" stroke-linecap="round"/><path d="M9.5 9.5 L14.5 14.5" stroke="#f0a840" stroke-width="1.6" stroke-linecap="round"/><circle cx="6" cy="6" r="5.3" fill="url(#gLens)" stroke="#5a8ab0" stroke-width="1"/></svg>
<div class="a" style="left:475px;top:51px;width:22px;height:24px;background:linear-gradient(#b4b4b4,#a2a2a2);border:1px solid #6a6a6a;box-shadow:inset -1px -1px 0 #d8d8d8"></div>
<svg class="a" style="left:478px;top:55px;" width="16" height="16" viewBox="0 0 16 16"><defs><linearGradient id="gTg" x1="0" y1="0" x2="0" y2="1"><stop offset="0" stop-color="#e8e8f4"/><stop offset="1" stop-color="#ffffff"/></linearGradient></defs><rect x="0.6" y="0.6" width="14.8" height="15" fill="url(#gTg)" stroke="#4a4272" stroke-width="1.2"/><path d="M2.5 9 H13.5 M2.5 11.2 H13.5 M2.5 13.4 H13.5" stroke="#4a3a6a" stroke-width=".9"/></svg>
<svg class="a" style="left:510px;top:55px;" width="17" height="17" viewBox="0 0 17 17"><defs><linearGradient id="gOv" x1="0" y1="0" x2="1" y2="1"><stop offset="0" stop-color="#e8e8e8"/><stop offset="1" stop-color="#b8b8b8"/></linearGradient></defs><rect x="1.6" y="1.6" width="9.4" height="9.4" fill="#fff" stroke="#000" stroke-width="1.3"/><rect x="5" y="5" width="10.4" height="10.4" fill="url(#gOv)" stroke="#000" stroke-width="1.3"/></svg>
<svg class="a" style="left:532px;top:55px;" width="16" height="16" viewBox="0 0 16 16"><rect x="0.6" y="0.6" width="14.8" height="14.8" fill="#fff" stroke="#000" stroke-width="1.2"/><rect x="2.5" y="2.5" width="4" height="4" fill="#fff" stroke="#000" stroke-width="1"/><path d="M13.5 3.6 V11.2 M10.2 3.6 H14.1" fill="none" stroke="#000" stroke-width="1.2"/><path d="M8.2 3.6 L10.8 1.2 V6 Z" fill="#000"/><path d="M2.5 9.4 H11 M2.5 11.5 H14 M2.5 13.5 H14" stroke="#8aa8f4" stroke-width=".9"/></svg>
<svg class="a" style="left:554px;top:55px;" width="16" height="16" viewBox="0 0 16 16"><rect x="0.6" y="0.6" width="14.8" height="14.8" fill="#fff" stroke="#000" stroke-width="1.2"/><rect x="2.5" y="2.5" width="4" height="4" fill="#fff" stroke="#000" stroke-width="1"/><path d="M13.5 3.6 V11.2 M10.2 3.6 H14.1" fill="none" stroke="#000" stroke-width="1.2"/><path d="M8.2 3.6 L10.8 1.2 V6 Z" fill="#000"/><path d="M2.5 9.4 H11 M2.5 11.5 H14 M2.5 13.5 H14" stroke="#8aa8f4" stroke-width=".9"/></svg>
<svg class="a" style="left:586px;top:55px;" width="17" height="16" viewBox="0 0 17 16"><path d="M4 9.5 L10.5 2 L16.5 9 L9.5 16 Z" fill="#1a9a1a"/><path d="M10.5 2 L16.5 9 L9.5 16 Z" fill="#0a7a0a" opacity=".5"/><path d="M0.5 0.5 H7.5 V2.5 H6 V10.5 L12.5 2.5 H11 V0.5 H16.5 V2.5 L5 15.5 H3.5 V2.5 H0.5 Z" fill="#f4f4f4" stroke="#111" stroke-width=".9"/><path d="M7 13.5 L8 10.5 H15.5 L14.5 13.5 Z" fill="#1a1a1a"/><path d="M8.6 12.6 L9.2 11.2 M10.6 12.6 L11.2 11.2 M12.6 12.6 L13.2 11.2" stroke="#e8e8e8" stroke-width=".7"/></svg>
<svg class="a" style="left:608px;top:61px;" width="6" height="6" viewBox="0 0 6 6"><path d="M0 0 H5.5 L2.75 5 Z" fill="#777"/></svg>
<svg class="a" style="left:619px;top:55px;" width="15" height="16" viewBox="0 0 15 16"><path d="M0.5 0.5 H9.5 L13.5 4.5 V15.5 H0.5 Z" fill="url(#gPage)" stroke="#aaa"/><path d="M9.5 0.5 V4.5 H13.5" fill="#e0e0e0" stroke="#aaa" stroke-width=".8"/><path d="M3 5 H10" stroke="#d8d8d8" stroke-width="1"/><rect x="3" y="8.5" width="8" height="2.5" rx="1" fill="#5a9ae8"/><path d="M3 12.5 H11" stroke="#6a6a6a" stroke-width="1"/></svg>
<svg class="a" style="left:819px;top:58px;" width="11" height="10" viewBox="0 0 11 10"><path d="M1.5 1.5 L9 8.5 M9 1.5 L1.5 8.5" stroke="#333" stroke-width="1.6"/></svg>
<svg class="a" style="left:17px;top:470px;" width="20" height="20" viewBox="0 0 20 20"><path d="M4 3.5 L16 15.5" stroke="#262626" stroke-width="3.3" stroke-linecap="round"/><path d="M3.9 3.4 L6 5.5 M14 13.5 L16.1 15.6" stroke="#fff" stroke-width="1.3"/><path d="M10.5 2.8 L10.95 4.05 L12.2 4.5 L10.95 4.95 L10.5 6.2 L10.05 4.95 L8.8 4.5 L10.05 4.05 Z M14.5 1.8 L14.95 3.05 L16.2 3.5 L14.95 3.95 L14.5 5.2 L14.05 3.95 L12.8 3.5 L14.05 3.05 Z M3.5 6.8 L3.95 8.05 L5.2 8.5 L3.95 8.95 L3.5 10.2 L3.05 8.95 L1.8 8.5 L3.05 8.05 Z M4.5 10.8 L4.95 12.05 L6.2 12.5 L4.95 12.95 L4.5 14.2 L4.05 12.95 L2.8 12.5 L4.05 12.05 Z" fill="#262626"/></svg>
<svg class="a" style="left:19px;top:496px;" width="16" height="16" viewBox="0 0 16 16"><rect x="6.6" y="0.3" width="2.8" height="3.5" fill="#8a8aa8" transform="rotate(0 8 8)"/><rect x="6.6" y="0.3" width="2.8" height="3.5" fill="#8a8aa8" transform="rotate(36 8 8)"/><rect x="6.6" y="0.3" width="2.8" height="3.5" fill="#8a8aa8" transform="rotate(72 8 8)"/><rect x="6.6" y="0.3" width="2.8" height="3.5" fill="#8a8aa8" transform="rotate(108 8 8)"/><rect x="6.6" y="0.3" width="2.8" height="3.5" fill="#8a8aa8" transform="rotate(144 8 8)"/><rect x="6.6" y="0.3" width="2.8" height="3.5" fill="#8a8aa8" transform="rotate(180 8 8)"/><rect x="6.6" y="0.3" width="2.8" height="3.5" fill="#8a8aa8" transform="rotate(216 8 8)"/><rect x="6.6" y="0.3" width="2.8" height="3.5" fill="#8a8aa8" transform="rotate(252 8 8)"/><rect x="6.6" y="0.3" width="2.8" height="3.5" fill="#8a8aa8" transform="rotate(288 8 8)"/><rect x="6.6" y="0.3" width="2.8" height="3.5" fill="#8a8aa8" transform="rotate(324 8 8)"/><circle cx="8" cy="8" r="6" fill="url(#gGear)" stroke="#7a7a98" stroke-width=".6"/><circle cx="8" cy="8" r="2" fill="#f0f0f0" stroke="#666" stroke-width=".6"/></svg>
<svg class="a" style="left:19px;top:520px;" width="16" height="16" viewBox="0 0 16 16"><path d="M4.5 0.5 H12.5 L15.5 3.5 V15.5 H4.5 Z" fill="url(#gPage)" stroke="#9a9aaa"/><path d="M12.5 0.5 V3.5 H15.5" fill="#e0e0e0" stroke="#9a9aaa" stroke-width=".8"/><path d="M6 1.5 Q8 6 10.5 11 Q12 13 14 12 Q13 10 8.5 10.5 Q4 11.5 1.5 14.5 Q3.5 14 6.5 9 Q8 6 7.5 2 Z" fill="none" stroke="#e01a1a" stroke-width="1.5"/></svg>
<svg class="a" style="left:22px;top:554px;" width="12" height="17" viewBox="0 0 12 17"><defs><linearGradient id="gBk" x1="0" y1="0" x2="1" y2="0"><stop offset="0" stop-color="#e4ecff"/><stop offset=".35" stop-color="#ffffff"/><stop offset=".6" stop-color="#7ab0f4"/><stop offset="1" stop-color="#1a5ae0"/></linearGradient></defs><path d="M0.5 1.5 Q0.5 0.5 2 0.5 H10 Q11.2 0.5 11.2 2 V15 Q11.2 16 10 16 H2 Q0.5 16 0.5 15 Z" fill="url(#gBk)" stroke="#2a4ad0" stroke-width=".8"/><rect x="1.5" y="10" width="6" height="5" fill="#e8e8e4"/><path d="M1 16 H11" stroke="#1020a0" stroke-width="1.2"/></svg>
<svg class="a" style="left:19px;top:580px;" width="17" height="12" viewBox="0 0 17 12"><path d="M8.5 0.5 L16.5 11.5 H0.5 Z" fill="url(#gTri)" stroke="#3a8ad0" stroke-width=".7"/><path d="M5 8 H12" stroke="#dff" stroke-width="1"/></svg>
<svg class="a" style="left:19px;top:602px;" width="17" height="14" viewBox="0 0 17 14"><path d="M0.5 0.5 H16.5 L8.5 13.5 Z" fill="url(#gTri)" stroke="#3a8ad0" stroke-width=".7"/><path d="M1.5 3.2 H15.5" stroke="#dff" stroke-width="1"/></svg>
<svg class="a" style="left:19px;top:636px;" width="16" height="16" viewBox="0 0 16 16"><circle cx="8" cy="8" r="7.6" fill="url(#gRed)"/><path d="M5.3 6 Q5.3 3.2 8.2 3.2 Q11 3.3 10.9 5.8 Q10.8 7.3 8.8 8.3 Q8 8.8 8 10" fill="none" stroke="#fff" stroke-width="2"/><rect x="6.9" y="11" width="2.2" height="2.2" fill="#fff"/></svg>
</body></html>
